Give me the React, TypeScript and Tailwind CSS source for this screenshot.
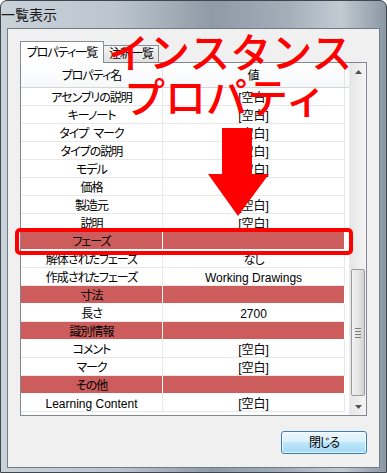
import React from 'react';

type Row = { name: string; value?: string; cat?: boolean };

const rows: Row[] = [
  { name: 'アセンブリの説明', value: '[空白]' },
  { name: 'キーノート', value: '[空白]' },
  { name: 'タイプ\u2002マーク', value: '[空白]' },
  { name: 'タイプの説明', value: '[空白]' },
  { name: 'モデル', value: '[空白]' },
  { name: '価格' },
  { name: '製造元', value: '[空白]' },
  { name: '説明', value: '[空白]' },
  { name: 'フェーズ', cat: true },
  { name: '解体されたフェーズ', value: 'なし' },
  { name: '作成されたフェーズ', value: 'Working Drawings' },
  { name: '寸法', cat: true },
  { name: '長さ', value: '2700' },
  { name: '識別情報', cat: true },
  { name: 'コメント', value: '[空白]' },
  { name: 'マーク', value: '[空白]' },
  { name: 'その他', cat: true },
  { name: 'Learning Content', value: '[空白]' },
];

// Japanese-only labels get a little tighter, like the UI font in the capture
const isJa = (s?: string) => !!s && /^[^\x00-\x7f]/.test(s) && !s.includes('[');

const ScrollBar = () => (
  <div className="w-[17px] flex flex-col bg-gradient-to-r from-[#e6e6e6] to-[#f4f4f4] border-l border-[#ececec]">
    <div className="h-[17px] flex items-center justify-center">
      <svg width="7" height="4" viewBox="0 0 7 4">
        <path d="M3.5 0 L7 4 L0 4 Z" fill="#505050" />
      </svg>
    </div>
    <div className="flex-1 px-[1px]">
      <div className="mt-[189px] h-[127px] rounded-[2px] border border-[#9a9a9a] bg-gradient-to-r from-[#f2f2f2] via-[#e6e6e6] to-[#d2d2d2] flex flex-col items-center justify-center gap-[2px]">
        <div className="w-[6px] h-[1px] bg-[#7a7a7a]" />
        <div className="w-[6px] h-[1px] bg-[#7a7a7a]" />
        <div className="w-[6px] h-[1px] bg-[#7a7a7a]" />
        <div className="w-[6px] h-[1px] bg-[#7a7a7a]" />
      </div>
    </div>
    <div className="h-[17px] flex items-center justify-center">
      <svg width="7" height="4" viewBox="0 0 7 4">
        <path d="M0 0 L7 0 L3.5 4 Z" fill="#505050" />
      </svg>
    </div>
  </div>
);

const App = () => {
  return (
    <div className="w-[387px] h-[473px] relative overflow-hidden bg-white font-['Liberation_Sans','Noto_Sans_CJK_JP',sans-serif] [font-feature-settings:'palt'] text-[12px] text-black">
      {/* window frame */}
      <div className="w-full h-full flex flex-col rounded-t-[7px] border border-[#3f464e] bg-[linear-gradient(90deg,#c9d1d9_0%,#bcc5ce_30%,#8e9aa6_55%,#a4afba_75%,#c3cbd2_88%,#8b97a3_100%)]">
        <div className="h-[27px] flex items-center text-[14px] text-[#1b1b1b] leading-none">
          一覧表示
        </div>
        <div className="flex-1 flex px-[6px] pb-[4px]">
          <div className="flex-1 flex flex-col border border-[#6f7c89] bg-[#f0f0f0] px-[12px] pt-[11px]">
            {/* tabs */}
            <div className="h-[22px] flex items-end">
              <div className="h-[22px] w-[84px] flex items-center justify-center bg-white border border-b-0 border-[#898c95] relative top-[1px] tracking-[-1px]">
                プロパティ一覧
              </div>
              <div className="h-[17px] w-[55px] flex items-center justify-center bg-gradient-to-b from-[#f3f3f3] to-[#e1e1e1] border border-l-0 border-b-0 border-[#898c95] tracking-[-1px]">
                注釈一覧
              </div>
            </div>
            {/* panel */}
            <div className="h-[354px] border border-[#828790] bg-white flex">
              <div className="flex-1 flex flex-col">
                <div className="h-[25px] flex border-b border-[#d5d5d5] bg-gradient-to-b from-white to-[#f7f8fa]">
                  <div className="w-[142px] flex items-center justify-center pt-[2px] border-r border-[#e3e3e3] tracking-[-1px]">プロパティ名</div>
                  <div className="w-[182px] flex items-center justify-center pt-[2px] border-r border-[#e3e3e3]">値</div>
                </div>
                {rows.map((r, i) => (
                  <div key={i} className="h-[18px] flex">
                    <div
                      className={
                        (r.cat
                          ? 'w-[142px] flex items-center justify-center pt-[3px] bg-[#cd5c5c] border-r border-b border-white'
                          : 'w-[142px] flex items-center justify-center pt-[3px] border-r border-b border-[#e8e8e8]') +
                        (isJa(r.name) ? ' tracking-[-1px]' : '')
                      }
                    >
                      {r.name}
                    </div>
                    <div
                      className={
                        (r.cat
                          ? 'w-[182px] flex items-center justify-center pt-[3px] bg-[#cd5c5c] border-r border-b border-white'
                          : 'w-[182px] flex items-center justify-center pt-[3px] border-r border-b border-[#e8e8e8]') +
                        (isJa(r.value) ? ' tracking-[-1px]' : '')
                      }
                    >
                      {r.value}
                    </div>
                  </div>
                ))}
              </div>
              <ScrollBar />
            </div>
            {/* button */}
            <div className="flex justify-end mt-[15px]">
              <button className="w-[86px] h-[23px] rounded-[3px] border border-[#3c7fb1] bg-[linear-gradient(180deg,#eaf6fd_0%,#d9f0fc_50%,#bee6fd_50%,#a7d9f5_100%)] shadow-[inset_0_0_0_1px_rgba(255,255,255,0.7)] flex items-center justify-center tracking-[-1px]">
                閉じる
              </button>
            </div>
          </div>
        </div>
      </div>

      {/* annotation overlay */}
      <div className="absolute left-[108px] top-[28px] text-[41px] leading-[45px] font-medium text-[#ff0000] font-['Noto_Sans_CJK_JP',sans-serif] [font-feature-settings:normal] whitespace-nowrap pointer-events-none">
        <div>インスタンス</div>
        <div className="pl-[16px]">プロパティ</div>
      </div>
      <svg className="absolute left-[208px] top-[128px] pointer-events-none" width="61" height="88" viewBox="0 0 61 88">
        <path d="M14 0 H44 V46 H61 L30 88 L0 46 H14 Z" fill="#ff0000" />
      </svg>
      <div className="absolute left-[15px] top-[228px] w-[338px] h-[27px] border-4 border-[#ff0000] rounded-[5px] pointer-events-none" />
    </div>
  );
};

export default App;
